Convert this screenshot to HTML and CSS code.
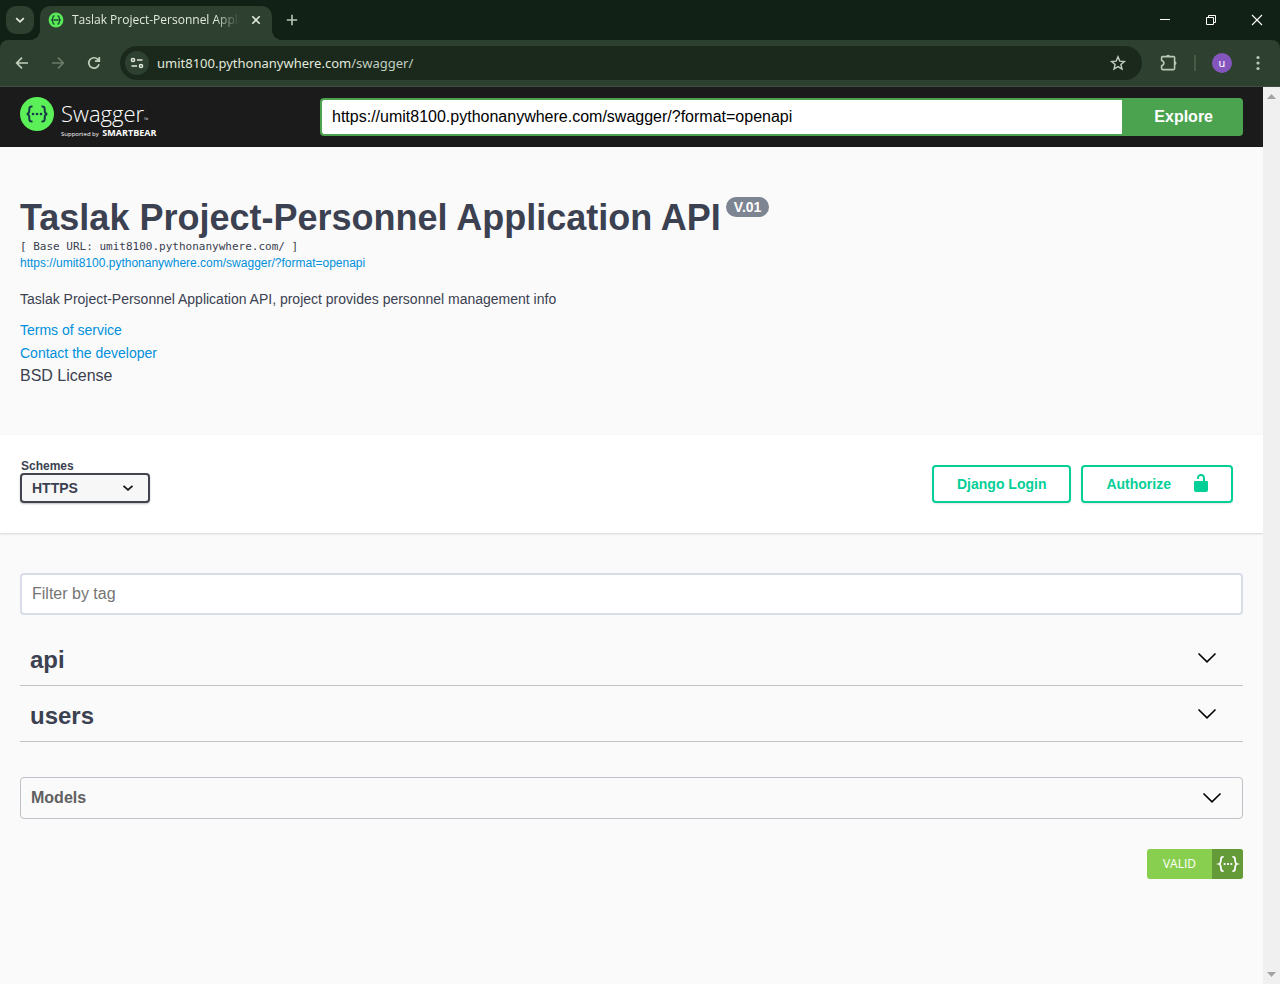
FILE: index.html
```html
<!DOCTYPE html>
<html lang="en">
<head>
<meta charset="utf-8">
<meta name="viewport" content="width=device-width, initial-scale=1">
<title>Taslak Project-Personnel Application API</title>
<link rel="stylesheet" href="styles.css">
</head>
<body>
<header class="browser">
  <div class="tabstrip">
    <button class="tab-search" aria-label="Search tabs"><svg width="20" height="20" viewBox="0 0 20 20"><path d="M6.200 8.200l3.800 3.600 3.800-3.600" fill="none" stroke="currentColor" stroke-width="1.800"/></svg></button>
    <div class="tab">
      <svg class="favicon" width="16" height="16" viewBox="0 0 16 16"><circle cx="8" cy="8" r="7.400" fill="#5bea57"/><path d="M6.600 3.800c-1.400 0-1.700.4-1.700 1.600 0 1.500-.2 2.300-1.500 2.600 1.300.3 1.500 1.100 1.500 2.600 0 1.200.3 1.600 1.700 1.600M9.400 3.800c1.400 0 1.700.4 1.700 1.600 0 1.500.2 2.300 1.500 2.600-1.300.3-1.500 1.100-1.500 2.600 0 1.200-.3 1.600-1.700 1.600M5.500 8h5" fill="none" stroke="#17482f" stroke-width="1.300"/></svg>
      <span class="tab-title">Taslak Project-Personnel Application API</span>
      <button class="tab-close" aria-label="Close tab"><svg width="16" height="16" viewBox="0 0 16 16"><path d="M4.300 4.300l7.400 7.400M11.700 4.300l-7.400 7.400" stroke="currentColor" stroke-width="1.600"/></svg></button>
    </div>
    <button class="new-tab" aria-label="New tab"><svg width="20" height="20" viewBox="0 0 20 20"><path d="M10 4.800v10.400M4.800 10h10.400" stroke="currentColor" stroke-width="1.600"/></svg></button>
    <div class="window-controls">
      <button aria-label="Minimize"><svg width="12" height="12" viewBox="0 0 12 12"><path d="M1 5.500h10" stroke="currentColor"/></svg></button>
      <button aria-label="Restore"><svg width="12" height="12" viewBox="0 0 12 12"><path d="M1.500 3.500h7v7h-7zM3.500 3.500v-2h7v7h-2" fill="none" stroke="currentColor"/></svg></button>
      <button aria-label="Close"><svg width="12" height="12" viewBox="0 0 12 12"><path d="M1 1l10 10M11 1L1 11" stroke="currentColor" stroke-width="1.100"/></svg></button>
    </div>
  </div>
  <div class="toolbar">
    <div class="nav">
      <button aria-label="Back"><svg width="20" height="20" viewBox="0 0 20 20"><path d="M16 10H5M10 4.700L4.700 10l5.300 5.300" fill="none" stroke="currentColor" stroke-width="1.700"/></svg></button>
      <button class="muted" aria-label="Forward"><svg width="20" height="20" viewBox="0 0 20 20"><path d="M4 10h11M10 4.700l5.300 5.300-5.300 5.300" fill="none" stroke="currentColor" stroke-width="1.700"/></svg></button>
      <button aria-label="Reload"><svg width="20" height="20" viewBox="0 0 20 20"><path d="M15 11.300A5.200 5.200 0 1 1 13.800 6.400L15.300 8M15.300 4v4.200h-4.300" fill="none" stroke="currentColor" stroke-width="1.700"/></svg></button>
    </div>
    <div class="omnibox">
      <button class="site-info" aria-label="Site information"><svg width="16" height="16" viewBox="0 0 16 16"><g fill="none" stroke="currentColor" stroke-width="1.500"><circle cx="4" cy="5" r="1.600"/><path d="M8 5h5.500M2.500 11H8"/><circle cx="12" cy="11" r="1.600"/></g></svg></button>
      <div class="address"><span>umit8100.pythonanywhere.com</span><span class="path">/swagger/</span></div>
      <button class="star" aria-label="Bookmark"><svg width="20" height="20" viewBox="0 0 20 20"><path d="M10 3.800l1.800 4.300 4.600.4-3.500 3 1.100 4.500-4-2.400-4 2.400 1.100-4.500-3.500-3 4.600-.4z" fill="none" stroke="currentColor" stroke-width="1.400"/></svg></button>
    </div>
    <div class="actions">
      <button aria-label="Extensions"><svg width="20" height="20" viewBox="0 0 20 20"><path d="M4.600 3.600h11c.6 0 1 .4 1 1v11c0 .6-.4 1-1 1h-11c-.6 0-1-.4-1-1v-2.800c3-.8 3-4.600 0-5.400V4.600c0-.6.4-1 1-1z" fill="none" stroke="currentColor" stroke-width="1.600"/><path d="M8.200 3.600a1.900 1.900 0 0 1 3.800 0zM16.600 8.200a1.900 1.900 0 0 1 0 3.800z" fill="currentColor"/></svg></button>
      <span class="divider"></span>
      <button class="avatar" aria-label="Profile">u</button>
      <button aria-label="Menu"><svg width="20" height="20" viewBox="0 0 20 20" fill="currentColor"><circle cx="10" cy="4.500" r="1.600"/><circle cx="10" cy="10" r="1.600"/><circle cx="10" cy="15.500" r="1.600"/></svg></button>
    </div>
  </div>
</header>
<div class="viewport">
  <main class="page">
    <div class="topbar">
      <a class="logo" href="#" aria-label="Swagger">
        <svg width="34" height="34" viewBox="0 0 34 34"><circle cx="17" cy="17" r="17" fill="#5bf058"/><g fill="none" stroke="#173647" stroke-width="2"><path d="M12.500 9.500c-2.500-.2-3.200.6-3.200 2.700 0 2.800 0 4.200-2.400 4.800 2.400.6 2.400 2 2.400 4.800 0 2.100.7 2.900 3.200 2.700M21.500 9.500c2.500-.2 3.200.6 3.200 2.700 0 2.800 0 4.200 2.400 4.800-2.400.6-2.400 2-2.400 4.800 0 2.100-.7 2.900-3.200 2.700"/></g><g fill="#173647"><circle cx="13" cy="17" r="1.300"/><circle cx="17" cy="17" r="1.300"/><circle cx="21" cy="17" r="1.300"/></g></svg>
        <span class="wordmark"><span class="brand">Swagger<span class="dot">™</span></span><span class="support">Supported by <b>SMARTBEAR</b></span></span>
      </a>
      <form class="explore">
        <input type="text" aria-label="API definition URL" value="https://umit8100.pythonanywhere.com/swagger/?format=openapi">
        <button type="button">Explore</button>
      </form>
    </div>
    <section class="info">
      <div class="title-row"><h1>Taslak Project-Personnel Application API</h1><span class="version">V.01</span></div>
      <div class="base-url">[ Base URL: umit8100.pythonanywhere.com/ ]</div>
      <a class="spec-link" href="#">https://umit8100.pythonanywhere.com/swagger/?format=openapi</a>
      <p>Taslak Project-Personnel Application API, project provides personnel management info</p>
      <a class="info-link" href="#">Terms of service</a>
      <a class="info-link" href="#">Contact the developer</a>
      <div class="license">BSD License</div>
    </section>
    <section class="schemes">
      <div class="scheme-field">
        <label for="scheme">Schemes</label>
        <div class="select-wrap">
          <select id="scheme"><option>HTTPS</option></select>
          <svg width="12" height="8" viewBox="0 0 12 8"><path d="M1.500 1.800L6 5.800l4.500-4" fill="none" stroke="#111" stroke-width="1.700"/></svg>
        </div>
      </div>
      <div class="auth">
        <button>Django Login</button>
        <button class="authorize">Authorize <svg width="20" height="20" viewBox="0 0 20 20"><path d="M15.800 8H14V5.600C14 2.700 12.700 1 10 1 7.400 1 6 2.600 6 5.500V6h2v-.8C8 3.700 8.600 3 10 3s2 .8 2 2.500V8H4c-.6 0-1 .5-1 1.200V17c0 1 .9 2 2 2h10c1.100 0 2-.9 2-2V9.200c0-.7-.5-1.200-1.200-1.200z" fill="currentColor"/></svg></button>
      </div>
    </section>
    <section class="content">
      <input class="filter" type="text" placeholder="Filter by tag" aria-label="Filter by tag">
      <h2 class="tag"><button><span>api</span><svg width="20" height="12" viewBox="0 0 20 12"><path d="M1.500 1.500L10 9.800l8.500-8.300" fill="none" stroke="#000" stroke-width="1.600"/></svg></button></h2>
      <h2 class="tag"><button><span>users</span><svg width="20" height="12" viewBox="0 0 20 12"><path d="M1.500 1.500L10 9.800l8.500-8.300" fill="none" stroke="#000" stroke-width="1.600"/></svg></button></h2>
      <h2 class="models"><button>Models<svg width="20" height="12" viewBox="0 0 20 12"><path d="M1.500 1.500L10 9.800l8.500-8.300" fill="none" stroke="#000" stroke-width="1.600"/></svg></button></h2>
      <a class="validator" href="#"><span>VALID</span><svg width="31" height="30" viewBox="0 0 31 30"><g fill="none" stroke="#fff" stroke-width="1.800"><path d="M11.600 7.900H11c-1.500 0-2 .7-2 2.300 0 2.800 0 4.200-2 4.800 2 .6 2 2 2 4.800 0 1.600.5 2.300 2 2.300h.6M20.400 7.900h.6c1.500 0 2 .7 2 2.300 0 2.800 0 4.200 2 4.800-2 .6-2 2-2 4.800 0 1.600-.5 2.300-2 2.300h-.6"/></g><path d="M11.700 14.100h1.800v1.800h-1.800zM15.100 14.100h1.800v1.800h-1.800zM18.500 14.100h1.800v1.800h-1.800z" fill="#fff"/></svg></a>
    </section>
  </main>
  <div class="scrollbar" aria-hidden="true">
    <svg width="9" height="5" viewBox="0 0 9 5"><path d="M0 5l4.500-5L9 5z" fill="#a3a3a3"/></svg>
    <svg width="9" height="5" viewBox="0 0 9 5"><path d="M0 0l4.500 5L9 0z" fill="#a3a3a3"/></svg>
  </div>
</div>
</body>
</html>
```

FILE: styles.css
```css
* { box-sizing: border-box; }

body {
  margin: 0;
  min-height: 100vh;
  display: flex;
  flex-direction: column;
  font-family: "Liberation Sans", Arial, sans-serif;
  color: #3b4151;
  background: #fafafa;
}

button {
  border: 0;
  padding: 0;
  background: none;
  color: inherit;
  font: inherit;
  cursor: pointer;
}

svg { display: block; flex: none; }
a { color: #0090db; text-decoration: none; }

/* Browser frame */
.browser {
  font-family: "Noto Sans", sans-serif;
  color: #e1e8dd;
  background: #122115;
}

.tabstrip {
  display: flex;
  align-items: flex-end;
  height: 40px;
  padding-left: 6px;
}

.tab-search {
  display: grid;
  place-items: center;
  width: 28px;
  height: 28px;
  margin: 0 6px 6px 0;
  border-radius: 10px;
  background: #2e4030;
}

.tab {
  position: relative;
  display: flex;
  align-items: center;
  width: 232px;
  height: 34px;
  padding: 0 8px 6px;
  border-radius: 10px 10px 0 0;
  background: #2e4030;
}

.tab::before,
.tab::after {
  content: "";
  position: absolute;
  bottom: 0;
  width: 10px;
  height: 10px;
}

.tab::before {
  right: 100%;
  background: radial-gradient(circle at 0 0, transparent 10px, #2e4030 10px);
}

.tab::after {
  left: 100%;
  background: radial-gradient(circle at 100% 0, transparent 10px, #2e4030 10px);
}

.tab-title {
  flex: 1;
  min-width: 0;
  margin: 0 8px;
  overflow: hidden;
  white-space: nowrap;
  font-family: "Open Sans", sans-serif;
  font-size: 12px;
  line-height: 18px;
  mask-image: linear-gradient(to right, #000 85%, transparent);
}

.new-tab { margin: 0 0 10px 10px; color: #b9c8b5; }

.window-controls {
  display: flex;
  align-self: stretch;
  margin-left: auto;
}

.window-controls button {
  display: grid;
  place-items: center;
  width: 46px;
  color: #fff;
}

.toolbar {
  display: flex;
  align-items: center;
  height: 47px;
  padding: 0 12px;
  border-bottom: 1px solid #414d41;
  border-radius: 8px 8px 0 0;
  background: #2e4030;
}

.nav { display: flex; gap: 16px; margin-right: 16px; color: #c1d0bc; }
.nav .muted { color: #6c7b69; }

.omnibox {
  flex: 1;
  display: flex;
  align-items: center;
  height: 34px;
  padding: 0 14px 0 5px;
  border-radius: 17px;
  background: #1a291c;
}

.site-info {
  display: grid;
  place-items: center;
  width: 24px;
  height: 24px;
  border-radius: 50%;
  background: #2e4030;
}

.address { flex: 1; margin-left: 8px; font-size: 13px; line-height: 20px; }
.path { color: #c3cec0; }
.star { color: #c3cec0; }
.actions { display: flex; align-items: center; gap: 16px; margin-left: 16px; color: #b9c8b5; }
.divider { width: 2px; height: 16px; background: #475a46; }

.avatar {
  width: 20px;
  height: 20px;
  border-radius: 50%;
  font-size: 11px;
  line-height: 18px;
  color: #fff;
  background: #8456bd;
}

/* Scrolling area */
.viewport { flex: 1; display: flex; }
.page { flex: 1; min-width: 0; }

.scrollbar {
  display: flex;
  flex-direction: column;
  justify-content: space-between;
  align-items: center;
  width: 17px;
  padding: 7px 0;
  background: #f0f0f0;
}

.topbar {
  display: grid;
  grid-template-columns: 300px 1fr;
  align-items: center;
  height: 60px;
  padding: 0 20px;
  background: #1b1b1b;
}

.logo {
  display: flex;
  gap: 7px;
  height: 40px;
  color: #fff;
  font-family: "Open Sans", sans-serif;
}

.wordmark { display: flex; flex-direction: column; }
.brand { font-size: 22px; font-weight: 300; line-height: 32px; }
.dot { font-size: 6px; line-height: 1; }
.support { font-size: 6px; line-height: 8px; white-space: nowrap; }
.support b { margin-left: 2px; font-size: 9px; line-height: 8px; }

.explore { display: flex; height: 38px; }

.explore input {
  flex: 1;
  min-width: 0;
  padding: 0 10px;
  border: 2px solid #4ba24f;
  border-right: 0;
  border-radius: 4px 0 0 4px;
  font: 16px "Liberation Sans", Arial, sans-serif;
  color: #000;
  background: #fff;
}

.explore button {
  padding: 0 30px 0 32px;
  border-radius: 0 4px 4px 0;
  font-size: 16px;
  font-weight: 700;
  color: #fff;
  background: #4ba24f;
}

.info {
  display: flex;
  flex-direction: column;
  align-items: flex-start;
  padding: 50px 20px 48px;
}

.title-row { display: flex; align-items: flex-start; gap: 5px; }

h1 { margin: 0; font-size: 36px; line-height: 41px; }

.version {
  padding: 0 8px;
  border-radius: 10px;
  font-size: 14px;
  font-weight: 700;
  line-height: 20px;
  color: #fff;
  background: #7d8492;
}

.base-url { font: 11px/17px "DejaVu Sans Mono", monospace; }
.spec-link { font-size: 12px; line-height: 17px; }
.info p { margin: 18px 0 11px; font-size: 14px; line-height: 18px; }
.info-link { font-size: 14px; line-height: 23px; }
.license { font-size: 16px; line-height: 22px; }

.schemes {
  display: flex;
  justify-content: space-between;
  align-items: flex-end;
  padding: 24px 30px 30px 20px;
  background: #fff;
  box-shadow: 0 1px 2px rgba(0, 0, 0, 0.15);
}

.scheme-field { display: flex; flex-direction: column; align-items: flex-start; }
.scheme-field label { padding-left: 1px; font-size: 12px; font-weight: 700; line-height: 14px; }
.select-wrap { position: relative; }

.select-wrap select {
  display: block;
  appearance: none;
  width: 130px;
  height: 30px;
  padding: 0 10px;
  border: 2px solid #41444e;
  border-radius: 4px;
  font: 700 14px "Liberation Sans", Arial, sans-serif;
  color: #3b4151;
  background: #f7f7f7;
  box-shadow: 0 1px 2px rgba(0, 0, 0, 0.25);
}

.select-wrap svg { position: absolute; right: 16px; top: 11px; pointer-events: none; }

.auth { display: flex; gap: 10px; }

.auth button {
  display: flex;
  align-items: center;
  height: 38px;
  padding: 0 23px;
  border: 2px solid #04cf97;
  border-radius: 4px;
  font-size: 14px;
  font-weight: 700;
  color: #04cf97;
  box-shadow: 0 1px 2px rgba(0, 0, 0, 0.1);
}

.auth .authorize { gap: 20px; padding-right: 20px; }
.authorize svg { margin-bottom: 2px; }

.content { display: flex; flex-direction: column; padding: 40px 20px; }

.filter {
  width: 100%;
  height: 42px;
  margin-bottom: 15px;
  padding: 0 10px;
  border: 2px solid #d8dde7;
  border-radius: 4px;
  font: 16px "Liberation Sans", Arial, sans-serif;
  background: #fff;
}

.filter::placeholder { color: #757575; }

.tag, .models { margin: 0; }

.tag button, .models button {
  display: flex;
  align-items: center;
  justify-content: space-between;
  width: 100%;
}

.tag button {
  height: 56px;
  padding: 0 26px 0 10px;
  border-bottom: 1px solid #bfc1c5;
  font-size: 24px;
}

.tag span { padding-top: 4px; }

.models {
  margin: 35px 0 30px;
  border: 1px solid #bfc1c8;
  border-radius: 4px;
  font-size: 16px;
  color: #606060;
}

.models button { height: 40px; padding: 0 20px 0 10px; }

.validator {
  align-self: flex-end;
  display: flex;
  overflow: hidden;
  border-radius: 3px;
  font: 500 12px/30px "Open Sans", sans-serif;
  color: #fff;
  background: #89cf4f;
}

.validator span { padding: 0 16px; }
.validator svg { background: #649a38; }
```
